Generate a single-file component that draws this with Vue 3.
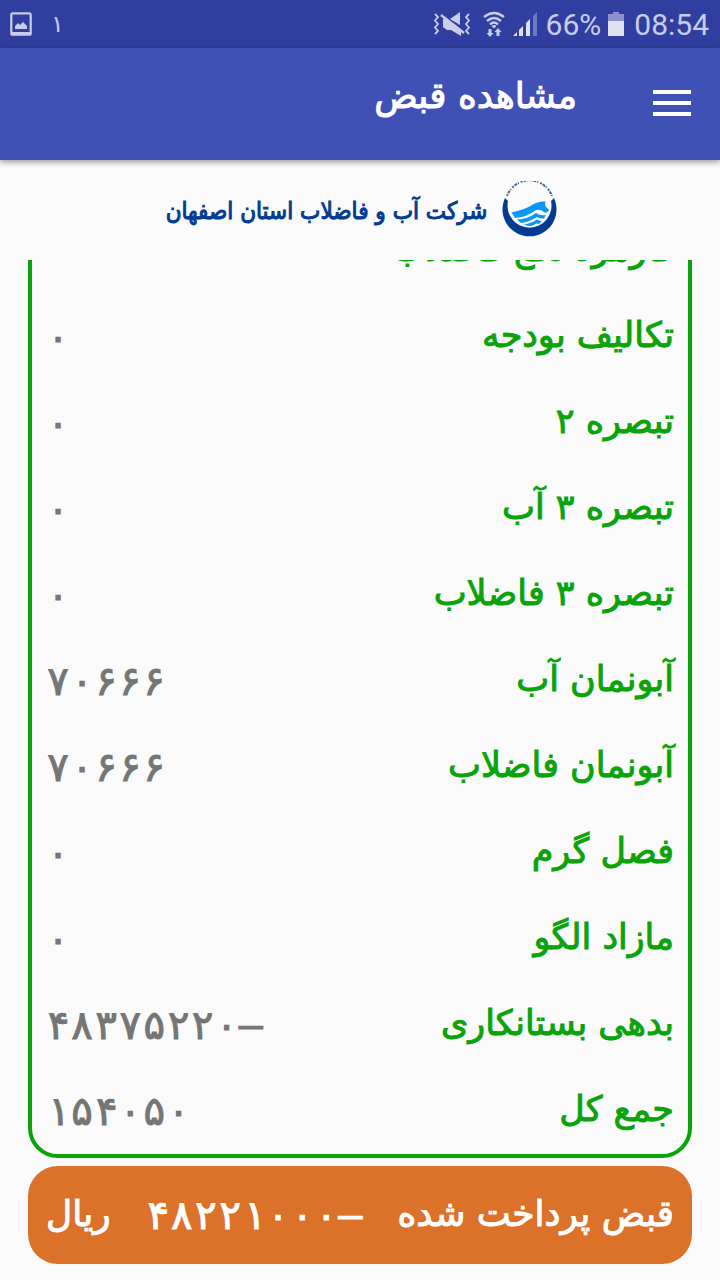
<script setup>
const rows = [
  { label: 'کارمزد دفع فاضلاب', value: '' },
  { label: 'تکالیف بودجه', value: '۰' },
  { label: 'تبصره ۲', value: '۰' },
  { label: 'تبصره ۳ آب', value: '۰' },
  { label: 'تبصره ۳ فاضلاب', value: '۰' },
  { label: 'آبونمان آب', value: '۷۰۶۶۶' },
  { label: 'آبونمان فاضلاب', value: '۷۰۶۶۶' },
  { label: 'فصل گرم', value: '۰' },
  { label: 'مازاد الگو', value: '۰' },
  { label: 'بدهی بستانکاری', value: '–۴۸۳۷۵۲۲۰' },
  { label: 'جمع کل', value: '۱۵۴۰۵۰' }
]
</script>

<template>
  <div class="screen" dir="rtl" lang="fa">
    <div class="status" dir="ltr">
      <svg class="picture" width="22" height="24" viewBox="0 0 22 24" aria-hidden="true">
        <rect x="1.3" y="1.3" width="19.4" height="21.4" rx="1.5" fill="none" stroke="#c9cde9" stroke-width="2.2" />
        <path d="M2 20h18v3H2z M5 17v-3l3-3 2 2 3-3 4 4v3z" fill="#c9cde9" />
      </svg>
      <span class="notice">۱</span>
      <div class="indicators">
        <svg width="38" height="26" viewBox="0 0 38 26" aria-hidden="true">
          <g fill="none" stroke="#c9cde9" stroke-width="1.8">
            <path d="M2 3l3 3-3 3.500 3 3.500-3 3.500 3 3.500-3 3M36 3l-3 3 3 3.500-3 3.500 3 3.500-3 3.500 3 3" />
          </g>
          <path d="M17 8l10-7v13z M10 8h4l14 11v6l-10-6h-4l-4-3z" fill="#c9cde9" />
          <path d="M8 4l23 18" stroke="#c9cde9" stroke-width="2.4" />
        </svg>
        <svg class="wifi" width="22" height="26" viewBox="0 0 22 26" aria-hidden="true">
          <g fill="none" stroke="#c9cde9" stroke-width="2.4">
            <path d="M1 6q10-8 20 0M4 10q7-6 14 0M7 13.500q4-4 8 0" />
          </g>
          <path d="M8.500 15q2.500-2 5 0L11 17.500z M5.500 18h3v4h2l-3.500 4-3.500-4h2z M13.500 25h3v-4h2L15 17l-3.500 4h2z" fill="#c9cde9" />
        </svg>
        <svg class="signal" width="24" height="24" viewBox="0 0 24 24" aria-hidden="true">
          <path d="M0 24l4-4v4z M6 18l4-4v10H6z M13 11l4-4v17h-4z" fill="#dfe1f2" />
          <path d="M20 4l4-4v24h-4z" fill="#6f79c1" />
        </svg>
        <span class="percent">66%</span>
        <svg class="battery" width="16" height="24" viewBox="0 0 16 24" aria-hidden="true">
          <path d="M0 2h5V0h6v2h5v8H0z" fill="#8990cb" />
          <path d="M0 9h16v15H0z" fill="#e0e2f2" />
        </svg>
        <time>08:54</time>
      </div>
    </div>

    <header class="bar">
      <button class="menu" type="button" aria-label="منو">
        <i></i><i></i><i></i>
      </button>
      <h1>مشاهده قبض</h1>
    </header>

    <div class="brand">
      <svg width="56" height="56" viewBox="0 0 56 56" aria-hidden="true">
        <path d="M3 17A27 27 0 1 0 52 17L49 20A22 22 0 1 1 6 20z" fill="#033b92" />
        <path d="M5 15A24 24 0 0 1 50 15" fill="none" stroke="#45659f" stroke-width="2" stroke-dasharray="2 1 3 1 1 2" />
        <path d="M9.500 31.500Q24 28 30 24Q36 20 43.500 20.500Q42 24 45 27Q46 28 47 28Q46 33 42 31Q38 28 34 29Q25 36 13 37z" fill="#0797f5" />
        <path d="M15 38.500Q26 38 34 32Q38 35 44 34L42 37.500Q38 38 35 36Q27 41 19 42z" fill="#0797f5" />
        <path d="M22 43.500Q30 42 35 38.500Q38 40 40 40L37 43L34 42.500Q32 44 29 45Q25 45 22 43.500z" fill="#0797f5" />
      </svg>
      <p>شرکت آب و فاضلاب استان اصفهان</p>
    </div>

    <main class="viewport">
      <table class="bill">
        <tbody>
          <tr v-for="row in rows" :key="row.label">
            <th scope="row">{{ row.label }}</th>
            <td>{{ row.value }}</td>
          </tr>
        </tbody>
      </table>
    </main>

    <footer class="paid">
      <span class="word">قبض پرداخت شده</span>
      <span class="amount">–۴۸۲۲۱۰۰۰</span>
      <span class="word">ریال</span>
    </footer>
  </div>
</template>

<style>
body {
  background: #fafafa;
}
</style>

<style scoped>
.screen {
  display: flex;
  flex-direction: column;
  height: 100vh;
  overflow: hidden;
  font-family: "DejaVu Sans", sans-serif;
  background: #fafafa;
}
.status {
  display: flex;
  align-items: center;
  flex: none;
  height: 48px;
  padding: 0 11px 0 10px;
  box-sizing: border-box;
  background: #303f9f;
  color: #c9cde9;
  font-family: Roboto, sans-serif;
  font-size: 30px;
}
.notice {
  margin-left: 19px;
  font-family: "DejaVu Sans", sans-serif;
  font-size: 24px;
}
.indicators {
  display: flex;
  align-items: center;
  margin-left: auto;
}
.wifi {
  margin-left: 12px;
}
.signal {
  margin-left: 8px;
}
.percent {
  margin-left: 9px;
}
.battery {
  margin: 0 10px 0 7px;
}
.bar {
  position: relative;
  z-index: 1;
  display: flex;
  flex: none;
  height: 112px;
  padding: 0 28px;
  box-sizing: border-box;
  background: #3f51b5;
  box-shadow: 0 2px 6px rgba(0, 0, 0, 0.4);
}
.menu {
  display: flex;
  flex-direction: column;
  justify-content: center;
  gap: 7px;
  width: 40px;
  padding: 0 1px 2px;
  border: 0;
  background: none;
}
.menu i {
  height: 4px;
  background: #fff;
}
h1 {
  margin: 0 75px 0 0;
  color: #fff;
  font-size: 36px;
  font-weight: 400;
  line-height: 96px;
  -webkit-text-stroke: 1px currentColor;
}
.brand {
  display: flex;
  flex: none;
  justify-content: center;
  align-items: center;
  gap: 15px;
  height: 98px;
  padding: 0 0 2px 4px;
  color: #033b92;
}
.brand p {
  margin: 0;
  padding-top: 4px;
  font-family: "DejaVu Sans Condensed", "DejaVu Sans", sans-serif;
  font-size: 24px;
  font-weight: 400;
  white-space: nowrap;
  -webkit-text-stroke: 1px currentColor;
}
.viewport {
  display: flex;
  flex-direction: column;
  justify-content: flex-end;
  flex: 1;
  min-height: 0;
  margin: 0 28px;
  overflow: hidden;
}
.bill {
  flex: none;
  width: 100%;
  border: 4px solid #0aa30a;
  border-radius: 30px;
  border-spacing: 0;
}
.bill th,
.bill td {
  height: 86px;
  padding: 0 14px;
  box-sizing: border-box;
  font-size: 35px;
  line-height: 40px;
  font-weight: 400;
  white-space: nowrap;
  -webkit-text-stroke: 1px currentColor;
}
.bill th {
  padding-bottom: 4px;
  color: #0aa30a;
  text-align: right;
}
.bill td {
  color: #757575;
  font-family: "DejaVu Sans Mono", "DejaVu Sans", monospace;
  font-size: 40px;
  text-align: left;
}
.paid {
  display: flex;
  flex: none;
  align-items: center;
  justify-content: space-between;
  height: 98px;
  margin: 8px 28px 16px;
  padding: 0 18px;
  box-sizing: border-box;
  border-radius: 30px;
  background: #dc722a;
  color: #fff;
  font-size: 36px;
  line-height: 40px;
  white-space: nowrap;
  -webkit-text-stroke: 1px currentColor;
}
.word {
  padding-bottom: 2px;
}
.amount {
  font-family: "DejaVu Sans Mono", "DejaVu Sans", monospace;
  font-size: 40px;
}
</style>
